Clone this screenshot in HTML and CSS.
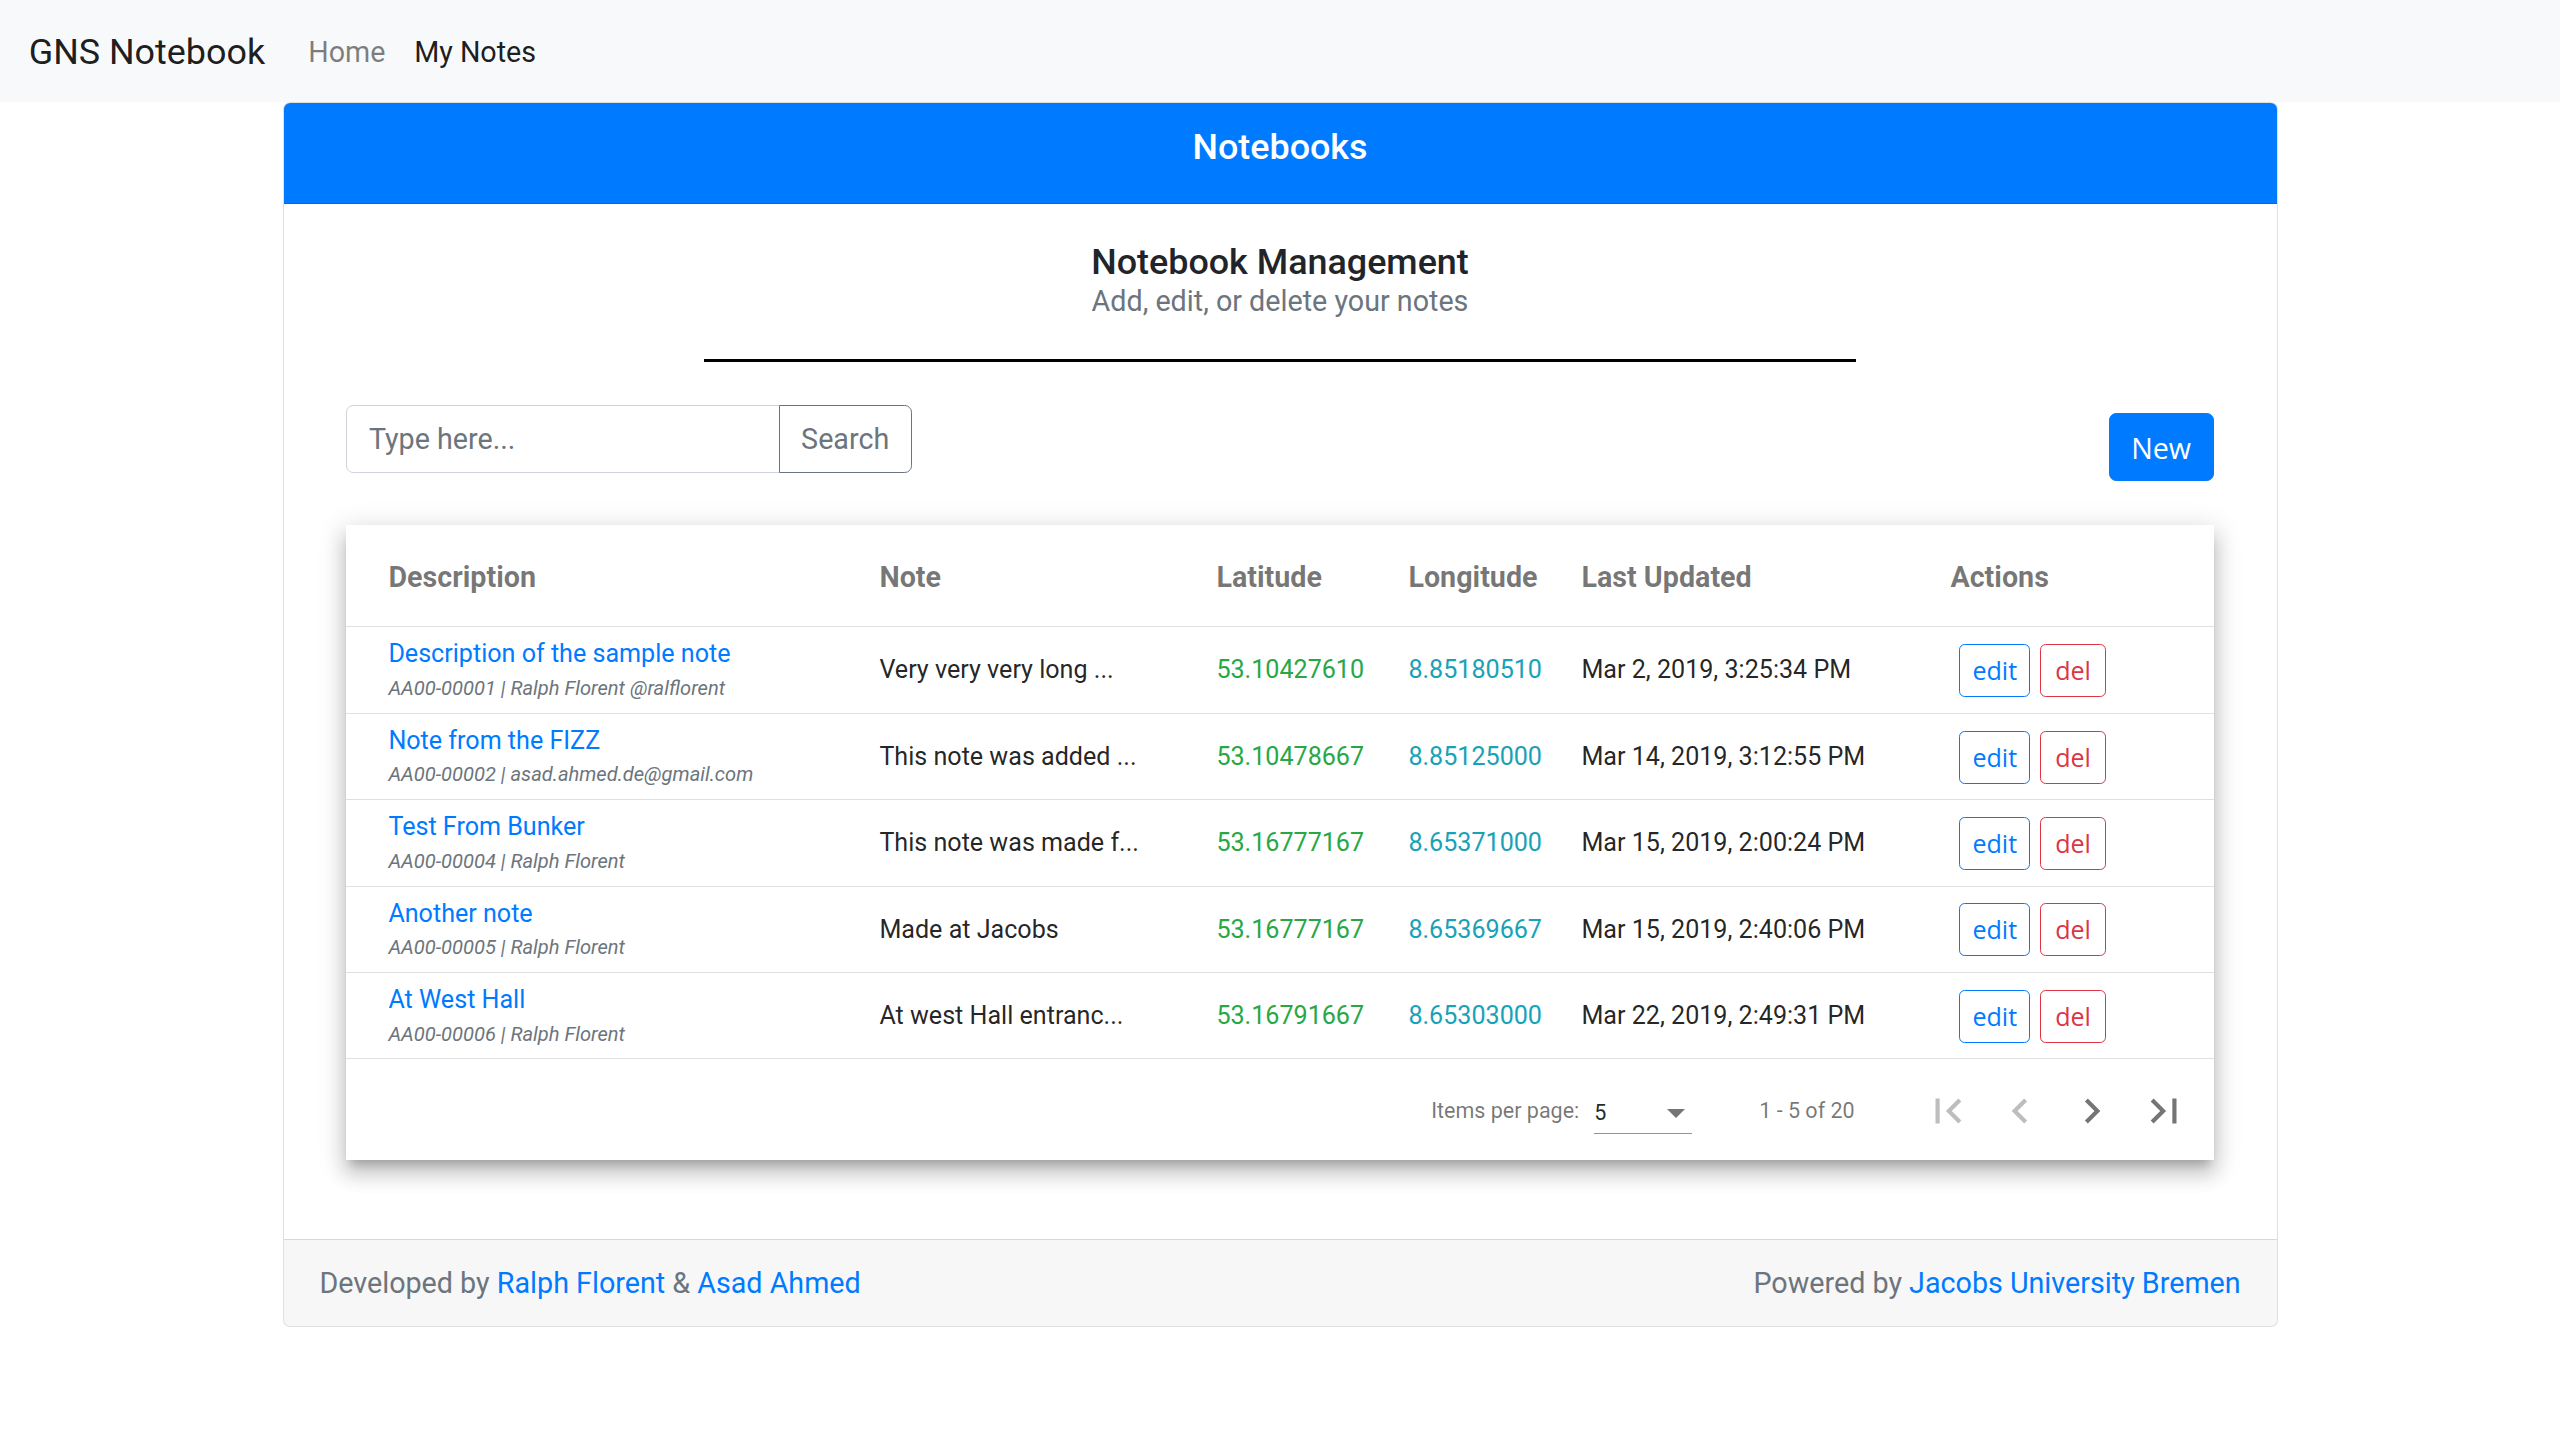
FILE: index.html
```html
<!DOCTYPE html>
<html lang="en">
<head>
<meta charset="utf-8">
<title>GNS Notebook</title>
<link rel="stylesheet" href="styles.css">
</head>
<body>
<nav class="navbar">
  <a class="brand">GNS Notebook</a>
  <ul class="nav">
    <li><a class="nav-link">Home</a></li>
    <li><a class="nav-link active">My Notes</a></li>
  </ul>
</nav>
<main class="container">
  <section class="card">
    <header class="card-header"><h5>Notebooks</h5></header>
    <div class="card-body">
      <div class="intro">
        <h5 class="title">Notebook Management</h5>
        <p class="subtitle">Add, edit, or delete your notes</p>
      </div>
      <hr class="divider">
      <div class="toolbar">
        <div class="input-group">
          <input class="search-input" type="text" placeholder="Type here...">
          <button class="btn-search">Search</button>
        </div>
        <button class="btn-new">New</button>
      </div>
      <div class="table-card">
        <div class="trow head">
          <div class="cell first">Description</div>
          <div class="cell">Note</div>
          <div class="cell">Latitude</div>
          <div class="cell">Longitude</div>
          <div class="cell">Last Updated</div>
          <div class="cell">Actions</div>
        </div>
        <div class="trow">
          <div class="cell first desc"><a class="desc-link">Description of the sample note</a><small class="meta">AA00-00001 | Ralph Florent @ralflorent</small></div>
          <div class="cell">Very very very long ...</div>
          <div class="cell lat">53.10427610</div>
          <div class="cell lng">8.85180510</div>
          <div class="cell">Mar 2, 2019, 3:25:34 PM</div>
          <div class="cell actions"><button class="btn-sm edit">edit</button><button class="btn-sm del">del</button></div>
        </div>
        <div class="trow">
          <div class="cell first desc"><a class="desc-link">Note from the FIZZ</a><small class="meta">AA00-00002 | asad.ahmed.de@gmail.com</small></div>
          <div class="cell">This note was added ...</div>
          <div class="cell lat">53.10478667</div>
          <div class="cell lng">8.85125000</div>
          <div class="cell">Mar 14, 2019, 3:12:55 PM</div>
          <div class="cell actions"><button class="btn-sm edit">edit</button><button class="btn-sm del">del</button></div>
        </div>
        <div class="trow">
          <div class="cell first desc"><a class="desc-link">Test From Bunker</a><small class="meta">AA00-00004 | Ralph Florent</small></div>
          <div class="cell">This note was made f...</div>
          <div class="cell lat">53.16777167</div>
          <div class="cell lng">8.65371000</div>
          <div class="cell">Mar 15, 2019, 2:00:24 PM</div>
          <div class="cell actions"><button class="btn-sm edit">edit</button><button class="btn-sm del">del</button></div>
        </div>
        <div class="trow">
          <div class="cell first desc"><a class="desc-link">Another note</a><small class="meta">AA00-00005 | Ralph Florent</small></div>
          <div class="cell">Made at Jacobs</div>
          <div class="cell lat">53.16777167</div>
          <div class="cell lng">8.65369667</div>
          <div class="cell">Mar 15, 2019, 2:40:06 PM</div>
          <div class="cell actions"><button class="btn-sm edit">edit</button><button class="btn-sm del">del</button></div>
        </div>
        <div class="trow">
          <div class="cell first desc"><a class="desc-link">At West Hall</a><small class="meta">AA00-00006 | Ralph Florent</small></div>
          <div class="cell">At west Hall entranc...</div>
          <div class="cell lat">53.16791667</div>
          <div class="cell lng">8.65303000</div>
          <div class="cell">Mar 22, 2019, 2:49:31 PM</div>
          <div class="cell actions"><button class="btn-sm edit">edit</button><button class="btn-sm del">del</button></div>
        </div>
        <div class="paginator">
          <span class="page-size-label">Items per page:</span>
          <div class="page-size-select"><span class="select-value">5</span><span class="select-arrow"></span></div>
          <span class="range-label">1 - 5 of 20</span>
          <button class="page-btn disabled"><svg viewBox="0 0 24 24"><path d="M18.41 16.59L13.82 12l4.59-4.59L17 6l-6 6 6 6zM6 6h2v12H6z"/></svg></button>
          <button class="page-btn disabled"><svg viewBox="0 0 24 24"><path d="M15.41 7.41L14 6l-6 6 6 6 1.41-1.41L10.83 12z"/></svg></button>
          <button class="page-btn"><svg viewBox="0 0 24 24"><path d="M10 6L8.59 7.41 13.17 12l-4.58 4.59L10 18l6-6z"/></svg></button>
          <button class="page-btn"><svg viewBox="0 0 24 24"><path d="M5.59 7.41L10.18 12l-4.59 4.59L7 18l6-6-6-6zM16 6h2v12h-2z"/></svg></button>
        </div>
      </div>
    </div>
    <footer class="card-footer">
      <span>Developed by <a>Ralph Florent</a> &amp; <a>Asad Ahmed</a></span>
      <span>Powered by <a>Jacobs University Bremen</a></span>
    </footer>
  </section>
</main>
</body>
</html>
```

FILE: styles.css
```css
* { box-sizing: border-box; }
html, body { margin: 0; padding: 0; }
body {
  font-family: Roboto, "Noto Sans", sans-serif;
  font-size: 28.7px;
  line-height: 1.5;
  color: #212529;
  background: #fff;
}
a { color: #007bff; text-decoration: none; cursor: pointer; }

/* navbar */
.navbar {
  display: flex;
  align-items: center;
  height: 101.5px;
  padding: 16px 28.7px 12px;
  background: #f8f9fa;
}
.brand {
  font-size: 35.9px;
  line-height: 53.8px;
  padding: 9px 0;
  margin-right: 28.7px;
  color: rgba(0,0,0,.9);
}
.nav { display: flex; list-style: none; margin: 0; padding: 0; }
.nav-link {
  display: block;
  padding: 14.4px;
  font-size: 28.7px;
  line-height: 43px;
  color: rgba(0,0,0,.5);
}
.nav-link.active { color: rgba(0,0,0,.9); }

/* card */
.container { width: 2049px; margin: 0 auto; padding: 0 27px; }
.card {
  border: 1.8px solid rgba(0,0,0,.125);
  border-radius: 7.2px;
  background: #fff;
  overflow: hidden;
}
.card-header {
  background: #007bff;
  color: #fff;
  padding: 23px 35.9px 20px;
  border-bottom: 1.8px solid rgba(0,0,0,.125);
  text-align: center;
}
.card-header h5 {
  margin: 0 0 14.4px;
  font-size: 35.9px;
  font-weight: 500;
  line-height: 1.2;
}
.card-body { padding: 37px 35.9px 35.9px; }
.intro { text-align: center; }
.title {
  margin: 0;
  font-size: 35.9px;
  font-weight: 500;
  line-height: 1.2;
  color: #212529;
}
.subtitle {
  margin: 0;
  font-size: 28.7px;
  line-height: 1.2;
  color: #6c757d;
}
.divider {
  width: 60%;
  margin: 41px auto 43px;
  border: 0;
  border-top: 3px solid #000;
}

/* toolbar */
.toolbar {
  display: flex;
  justify-content: space-between;
  align-items: flex-start;
  margin: 0 27px;
}
.input-group { display: flex; }
.search-input {
  width: 434px;
  height: 68px;
  padding: 10.8px 21.5px;
  border: 1.8px solid #ced4da;
  border-radius: 7.2px 0 0 7.2px;
  font-family: Roboto, sans-serif;
  font-size: 28.7px;
  color: #495057;
  outline: none;
}
.search-input::placeholder { color: #6c757d; }
.btn-search {
  height: 68px;
  margin-left: -1.8px;
  padding: 0 21.5px;
  border: 1.8px solid #6c757d;
  border-radius: 0 7.2px 7.2px 0;
  background: transparent;
  color: #6c757d;
  font-family: Roboto, sans-serif;
  font-size: 28.7px;
}
.btn-new {
  margin-top: 8px;
  height: 68px;
  padding: 0 21.5px;
  border: 1.8px solid #007bff;
  border-radius: 7.2px;
  background: #007bff;
  color: #fff;
  font-family: "Open Sans", "Noto Sans", sans-serif;
  font-size: 28.7px;
}

/* table */
.table-card {
  margin: 44px 27px 43px;
  background: #fff;
  box-shadow: 0 9px 9px -5px rgba(0,0,0,.2), 0 14px 18px 2px rgba(0,0,0,.14), 0 5px 25px 4px rgba(0,0,0,.12);
}
.trow {
  display: grid;
  grid-template-columns: 533px 337px 192px 173px 369px 264px;
  align-items: center;
  height: 86.4px;
  border-bottom: 1.8px solid rgba(0,0,0,.12);
  font-size: 25.1px;
  color: rgba(0,0,0,.87);
}
.trow.head {
  height: 102px;
  padding-top: 3px;
  font-size: 28.7px;
  font-weight: 700;
  color: rgba(0,0,0,.54);
}
.cell { white-space: nowrap; }
.cell.first { padding-left: 42px; }
.desc { display: flex; flex-direction: column; padding-bottom: 2px; }
.desc-link { font-size: 25.1px; line-height: 37.7px; }
.meta {
  font-size: 20.1px;
  line-height: 30px;
  font-style: italic;
  color: #6c757d;
}
.lat { color: #28a745; }
.lng { color: #17a2b8; }
.actions { display: flex; gap: 10px; padding-left: 9px; padding-top: 1px; }
.btn-sm {
  height: 53px;
  padding: 0 12px;
  border: 1.8px solid;
  border-radius: 5.7px;
  background: transparent;
  font-family: "Open Sans", "Noto Sans", sans-serif;
  font-size: 25.1px;
  line-height: 1.4;
}
.btn-sm.edit { color: #007bff; border-color: #007bff; }
.btn-sm.del { color: #dc3545; border-color: #dc3545; padding: 0 14px; }

/* paginator */
.paginator {
  display: flex;
  align-items: center;
  justify-content: flex-end;
  height: 101px;
  padding: 2px 14px 0;
  font-size: 21.5px;
  color: rgba(0,0,0,.54);
}
.page-size-label { margin-right: 15px; }
.page-size-select {
  display: flex;
  align-items: center;
  justify-content: space-between;
  width: 98px;
  height: 40px;
  margin-top: 6px;
  border-bottom: 1.8px solid rgba(0,0,0,.42);
}
.select-value { color: rgba(0,0,0,.87); }
.select-arrow {
  width: 0;
  height: 0;
  margin-right: 7px;
  border-left: 9px solid transparent;
  border-right: 9px solid transparent;
  border-top: 9px solid rgba(0,0,0,.54);
}
.range-label { margin: 0 57px 0 67px; }
.page-btn {
  display: flex;
  align-items: center;
  justify-content: center;
  width: 72px;
  height: 72px;
  padding: 0;
  border: 0;
  background: transparent;
  color: rgba(0,0,0,.54);
}
.page-btn.disabled { color: rgba(0,0,0,.26); }
.page-btn svg { width: 50px; height: 50px; fill: currentColor; }

/* footer */
.card-footer {
  display: flex;
  justify-content: space-between;
  padding: 22px 35.9px 21px;
  background: rgba(0,0,0,.03);
  border-top: 1.8px solid rgba(0,0,0,.125);
  font-size: 28.7px;
  line-height: 43px;
  color: #6c757d;
}
```
